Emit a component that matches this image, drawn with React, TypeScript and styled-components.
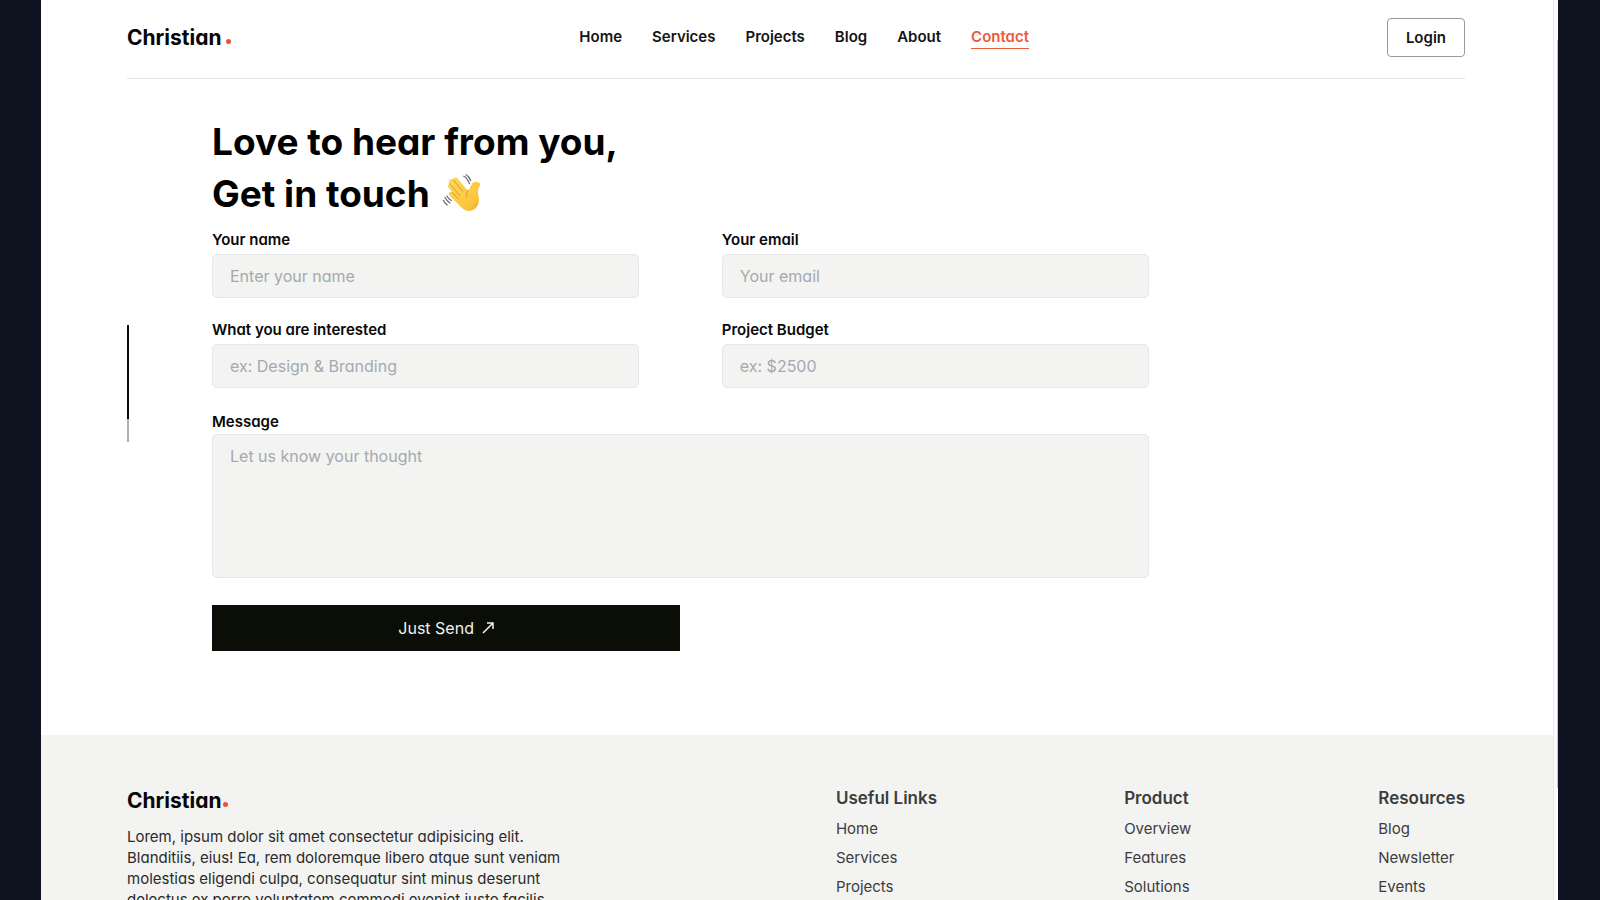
import React from "react";
import styled, { createGlobalStyle } from "styled-components";

const GlobalStyle = createGlobalStyle`
  *, *::before, *::after { box-sizing: border-box; }
  body {
    margin: 0;
    background: #0d1420;
    color: #080808;
    font-family: Inter, "Liberation Sans", sans-serif;
    font-feature-settings: "cv11" 1;
    font-size: 15px;
  }
  a { color: inherit; text-decoration: none; }
  h1, h2, h3, p, ul { margin: 0; padding: 0; }
  ul { list-style: none; }
  button, input, textarea { font: inherit; font-feature-settings: inherit; }
`;

const Frame = styled.div`
  display: flex;
  height: 100vh;
  padding: 0 42px 0 41px;
`;

const Page = styled.div`
  flex: 1;
  min-width: 0;
  overflow-y: auto;
  scrollbar-width: none;
  background: #fff;
`;

const ScrollTrack = styled.div`
  width: 5px;
  padding-top: 40px;
  background: #fbfbfd;
  border-left: 1px solid #ece6e6;
`;

const ScrollThumb = styled.div`
  height: 87%;
  border-right: 1px solid #c3c4ca;
`;

const Header = styled.header`
  display: flex;
  align-items: center;
  justify-content: space-between;
  margin: 0 88px 0 86px;
  padding: 18px 0 21px;
  border-bottom: 1px solid #e5e5e5;
`;

const Logo = styled.a<{ $gap: number }>`
  position: relative;
  display: inline-block;
  font-size: 21px;
  line-height: 30px;
  font-weight: 700;
  color: #050505;

  &::after {
    content: "";
    position: absolute;
    left: 100%;
    bottom: 9px;
    width: 5px;
    height: 5px;
    margin-left: ${(p) => p.$gap}px;
    border-radius: 50%;
    background: #ee4f35;
  }
`;

const Nav = styled.nav`
  display: flex;
  gap: 30px;
`;

const NavLink = styled.a<{ $active?: boolean }>`
  font-weight: 600;
  line-height: 22px;
  color: ${(p) => (p.$active ? "#ec5a38" : "#141414")};
  border-bottom: 1px solid ${(p) => (p.$active ? "#ec5a38" : "transparent")};
`;

const LoginButton = styled.button`
  height: 39px;
  padding: 0 18px;
  border: 1px solid #999;
  border-radius: 4px;
  background: #fff;
  color: #141414;
  font-weight: 600;
`;

const Main = styled.main`
  display: flex;
  align-items: center;
  margin: 0 88px 0 86px;
  padding: 37px 0 84px;
`;

const Progress = styled.div`
  width: 2px;
  height: 117px;
  margin-right: 83px;
  background: #b0b0b0;
`;

const ProgressDone = styled.div`
  height: 80%;
  background: #080808;
`;

const Contact = styled.form`
  width: 70%;
`;

const Title = styled.h1`
  margin-bottom: 8px;
  font-size: 37px;
  line-height: 52px;
  font-weight: 700;
  color: #000;
`;

const Wave = styled.svg`
  width: 39px;
  height: 38px;
  margin-left: 12px;
  vertical-align: -5px;
`;

const Fields = styled.div`
  display: grid;
  grid-template-columns: 1fr 1fr;
  gap: 20px 83px;
  margin-bottom: 22px;
`;

const Field = styled.div<{ $gap: number }>`
  display: flex;
  flex-direction: column;
  gap: ${(p) => p.$gap}px;
`;

const Label = styled.label`
  font-weight: 600;
  line-height: 24px;
`;

const Input = styled.input`
  width: 100%;
  height: 44px;
  padding: 0 17px;
  border: 1px solid #e5e7e8;
  border-radius: 5px;
  background: #f3f3f1;
  font-size: 16px;
  &::placeholder { color: #a3a9b1; opacity: 1; }
`;

const MessageBox = styled.textarea`
  width: 100%;
  height: 144px;
  padding: 9px 17px;
  border: 1px solid #e5e7e8;
  border-radius: 5px;
  background: #f3f3f1;
  font-size: 16px;
  line-height: 24px;
  resize: none;
  &::placeholder { color: #a3a9b1; opacity: 1; }
`;

const SendButton = styled.button`
  display: flex;
  align-items: center;
  justify-content: center;
  gap: 8px;
  width: 50%;
  height: 46px;
  margin-top: 27px;
  border: 0;
  background: #0b0d07;
  color: #f2f2f0;
  font-size: 16px;
`;

const Footer = styled.footer`
  display: flex;
  justify-content: space-between;
  padding: 51px 88px 0 86px;
  background: #f3f3f1;
`;

const About = styled.div`
  width: 39%;
`;

const Blurb = styled.p`
  max-width: 450px;
  margin-top: 10px;
  line-height: 21px;
  color: #2a2a2a;
`;

const LinkGroup = styled.div`
  color: #3c3c3c;
`;

const GroupTitle = styled.h3`
  margin-bottom: 4px;
  font-size: 17px;
  line-height: 24px;
  font-weight: 600;
`;

const GroupItem = styled.li`
  line-height: 29px;
`;

const navItems = ["Home", "Services", "Projects", "Blog", "About", "Contact"];

const fields = [
  { id: "name", label: "Your name", hint: "Enter your name" },
  { id: "email", label: "Your email", hint: "Your email" },
  { id: "interest", label: "What you are interested", hint: "ex: Design & Branding" },
  { id: "budget", label: "Project Budget", hint: "ex: $2500" },
];

const groups = [
  { title: "Useful Links", links: ["Home", "Services", "Projects"] },
  { title: "Product", links: ["Overview", "Features", "Solutions"] },
  { title: "Resources", links: ["Blog", "Newsletter", "Events"] },
];

function WavingHand() {
  return (
    <Wave viewBox="42 42 118 114" role="img" aria-label="Waving hand">
      <defs>
        <linearGradient id="skin" x1="0" y1="0" x2="1" y2="1">
          <stop offset="0" stopColor="#ffd75c" />
          <stop offset="0.75" stopColor="#fcc63c" />
          <stop offset="1" stopColor="#eba226" />
        </linearGradient>
      </defs>
      <path
        fill="url(#skin)"
        d="M78 55c4-4 9-3 12 1l25 30c3 4 7 5 10 1 3-5 4-10 8-16 3-5 8-7 14-5 9 1 13 4 10 10-4 6-6 12-6 19 0 13 5 20 2 32-3 14-14 25-27 26-10 1-18-4-26-11L66 108c-4-4-5-8-2-11s6-2 9 0l-11-13c-3-4-3-8 0-11l3-2c-4-5-3-9 0-12 4-3 8-3 11 0-1-2 0-3 2-4z"
      />
      <g fill="none" stroke="#d9992b" strokeWidth="3" strokeLinecap="round">
        <path d="M76 59l29 35M65 71l31 36M73 97l18 20" />
        <path d="M121 91c-6 6-6 14-3 20" />
      </g>
      <g fill="none" stroke="#6d6677" strokeWidth="3.5" strokeLinecap="round">
        <path d="M108 48c8 4 13 11 17 23M115 44c7 4 11 10 14 18" />
        <path d="M51 112c3 7 7 12 15 17M46 121c2 6 6 10 12 14M57 108c3 6 6 10 13 14" />
      </g>
    </Wave>
  );
}

export default function App() {
  return (
    <>
      <GlobalStyle />
      <Frame>
        <Page>
          <Header>
            <Logo href="#" $gap={5}>Christian</Logo>
            <Nav>
              {navItems.map((item) => (
                <NavLink key={item} href="#" $active={item === "Contact"}>
                  {item}
                </NavLink>
              ))}
            </Nav>
            <LoginButton type="button">Login</LoginButton>
          </Header>

          <Main>
            <Progress>
              <ProgressDone />
            </Progress>
            <Contact onSubmit={(e) => e.preventDefault()}>
              <Title>
                Love to hear from you,
                <br />
                Get in touch
                <WavingHand />
              </Title>
              <Fields>
                {fields.map((f) => (
                  <Field key={f.id} $gap={2}>
                    <Label htmlFor={f.id}>{f.label}</Label>
                    <Input id={f.id} placeholder={f.hint} />
                  </Field>
                ))}
              </Fields>
              <Field $gap={0}>
                <Label htmlFor="message">Message</Label>
                <MessageBox id="message" placeholder="Let us know your thought" />
              </Field>
              <SendButton type="submit">
                Just Send
                <svg width="12" height="12" viewBox="0 0 12 12" fill="none" stroke="currentColor" strokeWidth="1.5" aria-hidden="true">
                  <path d="M1 11L11 1M5 1H11V7" />
                </svg>
              </SendButton>
            </Contact>
          </Main>

          <Footer>
            <About>
              <Logo href="#" $gap={2}>Christian</Logo>
              <Blurb>
                Lorem, ipsum dolor sit amet consectetur adipisicing elit. Blanditiis, eius! Ea, rem
                doloremque libero atque sunt veniam molestias eligendi culpa, consequatur sint minus
                deserunt delectus ex porro voluptatem commodi eveniet iusto facilis
              </Blurb>
            </About>
            {groups.map((g) => (
              <LinkGroup key={g.title}>
                <GroupTitle>{g.title}</GroupTitle>
                <ul>
                  {g.links.map((link) => (
                    <GroupItem key={link}>
                      <a href="#">{link}</a>
                    </GroupItem>
                  ))}
                </ul>
              </LinkGroup>
            ))}
          </Footer>
        </Page>
        <ScrollTrack>
          <ScrollThumb />
        </ScrollTrack>
      </Frame>
    </>
  );
}
